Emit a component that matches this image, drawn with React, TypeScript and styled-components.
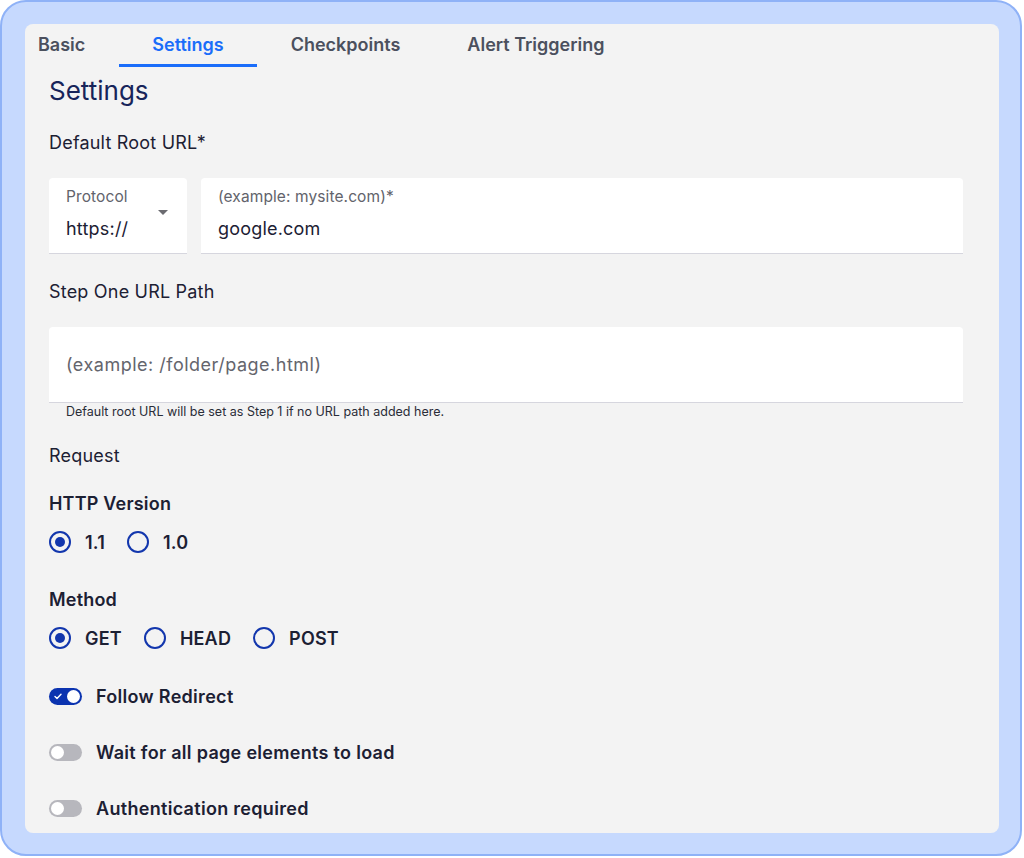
import React, { useState } from 'react';
import styled, { createGlobalStyle } from 'styled-components';

const GlobalStyle = createGlobalStyle`
  html, body {
    margin: 0;
    padding: 0;
    background: #ffffff;
  }
  body {
    font-family: Inter, "Noto Sans", sans-serif;
    color: #1c2033;
  }
  * {
    box-sizing: border-box;
  }
`;

const tabs = ['Basic', 'Settings', 'Checkpoints', 'Alert Triggering'];

// 라디오 그룹
const Radios = ({ options, value, onChange }: { options: string[]; value: string; onChange: (v: string) => void }) => (
  <RadioRow>
    {options.map((o) => (
      <RadioItem key={o} onClick={() => onChange(o)}>
        <RadioCircle checked={o === value} />
        <span>{o}</span>
      </RadioItem>
    ))}
  </RadioRow>
);

const App = () => {
  const [tab, setTab] = useState('Settings');
  const [version, setVersion] = useState('1.1');
  const [method, setMethod] = useState('GET');
  const [redirect, setRedirect] = useState(true);
  const [waitAll, setWaitAll] = useState(false);
  const [auth, setAuth] = useState(false);

  return (
    <>
      <GlobalStyle />
      <Frame>
        <Panel>
          {/* 탭 */}
          <TabList>
            {tabs.map((t) => (
              <Tab key={t} active={t === tab} onClick={() => setTab(t)}>
                {t}
              </Tab>
            ))}
          </TabList>

          <Content>
            <Heading>Settings</Heading>

            <Label>Default Root URL*</Label>
            <FieldRow>
              <Field width="138px">
                <FieldLabel>Protocol</FieldLabel>
                <FieldValue>https://</FieldValue>
                <Caret />
              </Field>
              <Field>
                <FieldLabel>(example: mysite.com)*</FieldLabel>
                <FieldValue>google.com</FieldValue>
              </Field>
            </FieldRow>

            <Label style={{ marginTop: '26px' }}>Step One URL Path</Label>
            <FieldRow>
              <Field centered>
                <Placeholder>(example: /folder/page.html)</Placeholder>
              </Field>
            </FieldRow>
            <Helper>Default root URL will be set as Step 1 if no URL path added here.</Helper>

            <Label>Request</Label>

            <GroupTitle>HTTP Version</GroupTitle>
            <Radios options={['1.1', '1.0']} value={version} onChange={setVersion} />

            <GroupTitle style={{ marginTop: '35px' }}>Method</GroupTitle>
            <Radios options={['GET', 'HEAD', 'POST']} value={method} onChange={setMethod} />

            <ToggleList>
              <ToggleRow onClick={() => setRedirect(!redirect)}>
                <Switch on={redirect}>
                  {redirect && (
                    <svg width="8" height="7" viewBox="0 0 8 7">
                      <path d="M1 3.6 L3 5.5 L7 1.2" stroke="#fff" strokeWidth="1.4" fill="none" strokeLinecap="round" strokeLinejoin="round" />
                    </svg>
                  )}
                </Switch>
                <span>Follow Redirect</span>
              </ToggleRow>
              <ToggleRow onClick={() => setWaitAll(!waitAll)}>
                <Switch on={waitAll} />
                <span>Wait for all page elements to load</span>
              </ToggleRow>
              <ToggleRow onClick={() => setAuth(!auth)}>
                <Switch on={auth} />
                <span>Authentication required</span>
              </ToggleRow>
            </ToggleList>
          </Content>
        </Panel>
      </Frame>
    </>
  );
};

// 바깥 파란 테두리 프레임
const Frame = styled.div`
  width: 1022px;
  height: 856px;
  border: 2px solid #8fb2f7;
  border-radius: 26px;
  background: #c6d9fe;
  padding: 22px 21px 21px 23px;
  display: flex;
`;

// 회색 패널
const Panel = styled.div`
  flex: 1;
  background: #f3f3f3;
  border-radius: 8px;
  display: flex;
  flex-direction: column;
`;

const TabList = styled.div`
  display: flex;
  height: 43px;
`;

const Tab = styled.div<{ active?: boolean }>`
  padding: 0 33.5px;
  display: flex;
  align-items: center;
  font-size: 18px;
  font-weight: 600;
  color: ${(p) => (p.active ? '#1a6dfa' : '#4b505e')};
  border-bottom: 3px solid ${(p) => (p.active ? '#1a6dfa' : 'transparent')};
  cursor: pointer;

  &:first-child {
    padding-left: 13px;
  }
`;

const Content = styled.div`
  padding: 8px 36px 0 24px;
  display: flex;
  flex-direction: column;
`;

const Heading = styled.div`
  font-size: 26px;
  line-height: 32px;
  color: #17245a;
`;

const Label = styled.div`
  margin-top: 24px;
  font-size: 18px;
  line-height: 24px;
  letter-spacing: 0.2px;
  color: #1c2033;
`;

const FieldRow = styled.div`
  display: flex;
  gap: 14px;
  margin-top: 23px;
`;

const Field = styled.div<{ width?: string; centered?: boolean }>`
  position: relative;
  width: ${(p) => p.width || 'auto'};
  flex: ${(p) => (p.width ? 'none' : '1')};
  height: 76px;
  background: #ffffff;
  border-radius: 4px 4px 0 0;
  border-bottom: 1px solid #d6d6de;
  padding: 0 17px;
  display: flex;
  flex-direction: column;
  justify-content: ${(p) => (p.centered ? 'center' : 'flex-start')};
  padding-top: ${(p) => (p.centered ? '0' : '9px')};
`;

const FieldLabel = styled.div`
  font-size: 15.5px;
  line-height: 20px;
  letter-spacing: 0.1px;
  color: #62636b;
`;

const FieldValue = styled.div`
  margin-top: 10px;
  font-size: 18px;
  line-height: 24px;
  letter-spacing: 0.2px;
  color: #1c2033;
`;

const Placeholder = styled.div`
  font-size: 18px;
  line-height: 24px;
  letter-spacing: 0.5px;
  color: #64656d;
`;

// 드롭다운 화살표
const Caret = styled.span`
  position: absolute;
  right: 19px;
  top: 32px;
  width: 0;
  height: 0;
  border-left: 5px solid transparent;
  border-right: 5px solid transparent;
  border-top: 5px solid #6b6b70;
`;

const Helper = styled.div`
  margin-top: 1px;
  padding-left: 17px;
  font-size: 12.5px;
  line-height: 16px;
  color: #2a2d38;
`;

const GroupTitle = styled.div`
  margin-top: 24px;
  font-size: 18px;
  line-height: 24px;
  font-weight: 600;
  letter-spacing: 0.2px;
  color: #1c2033;
`;

const RadioRow = styled.div`
  display: flex;
  gap: 22px;
  margin-top: 15px;
`;

const RadioItem = styled.div`
  display: flex;
  align-items: center;
  gap: 14px;
  font-size: 18px;
  font-weight: 600;
  letter-spacing: 0.2px;
  color: #1c2033;
  height: 22px;
  cursor: pointer;
`;

const RadioCircle = styled.span<{ checked?: boolean }>`
  width: 22px;
  height: 22px;
  border-radius: 50%;
  border: 2px solid #1236ad;
  display: flex;
  align-items: center;
  justify-content: center;

  &::after {
    content: '';
    width: 10px;
    height: 10px;
    border-radius: 50%;
    background: ${(p) => (p.checked ? '#1236ad' : 'transparent')};
  }
`;

const ToggleList = styled.div`
  margin-top: 35px;
  display: flex;
  flex-direction: column;
  gap: 32px;
`;

const ToggleRow = styled.div`
  display: flex;
  align-items: center;
  gap: 14px;
  height: 24px;
  font-size: 18px;
  font-weight: 600;
  letter-spacing: 0.3px;
  color: #1c2033;
  cursor: pointer;
`;

// 토글 스위치
const Switch = styled.span<{ on?: boolean }>`
  position: relative;
  width: 33px;
  height: 17px;
  border-radius: 9px;
  background: ${(p) => (p.on ? '#0b33b0' : '#b7b7bd')};
  display: flex;
  align-items: center;
  padding-left: 5px;

  &::after {
    content: '';
    position: absolute;
    top: 2px;
    left: ${(p) => (p.on ? '18px' : '2px')};
    width: 13px;
    height: 13px;
    border-radius: 50%;
    background: #ffffff;
  }
`;

export default App;
